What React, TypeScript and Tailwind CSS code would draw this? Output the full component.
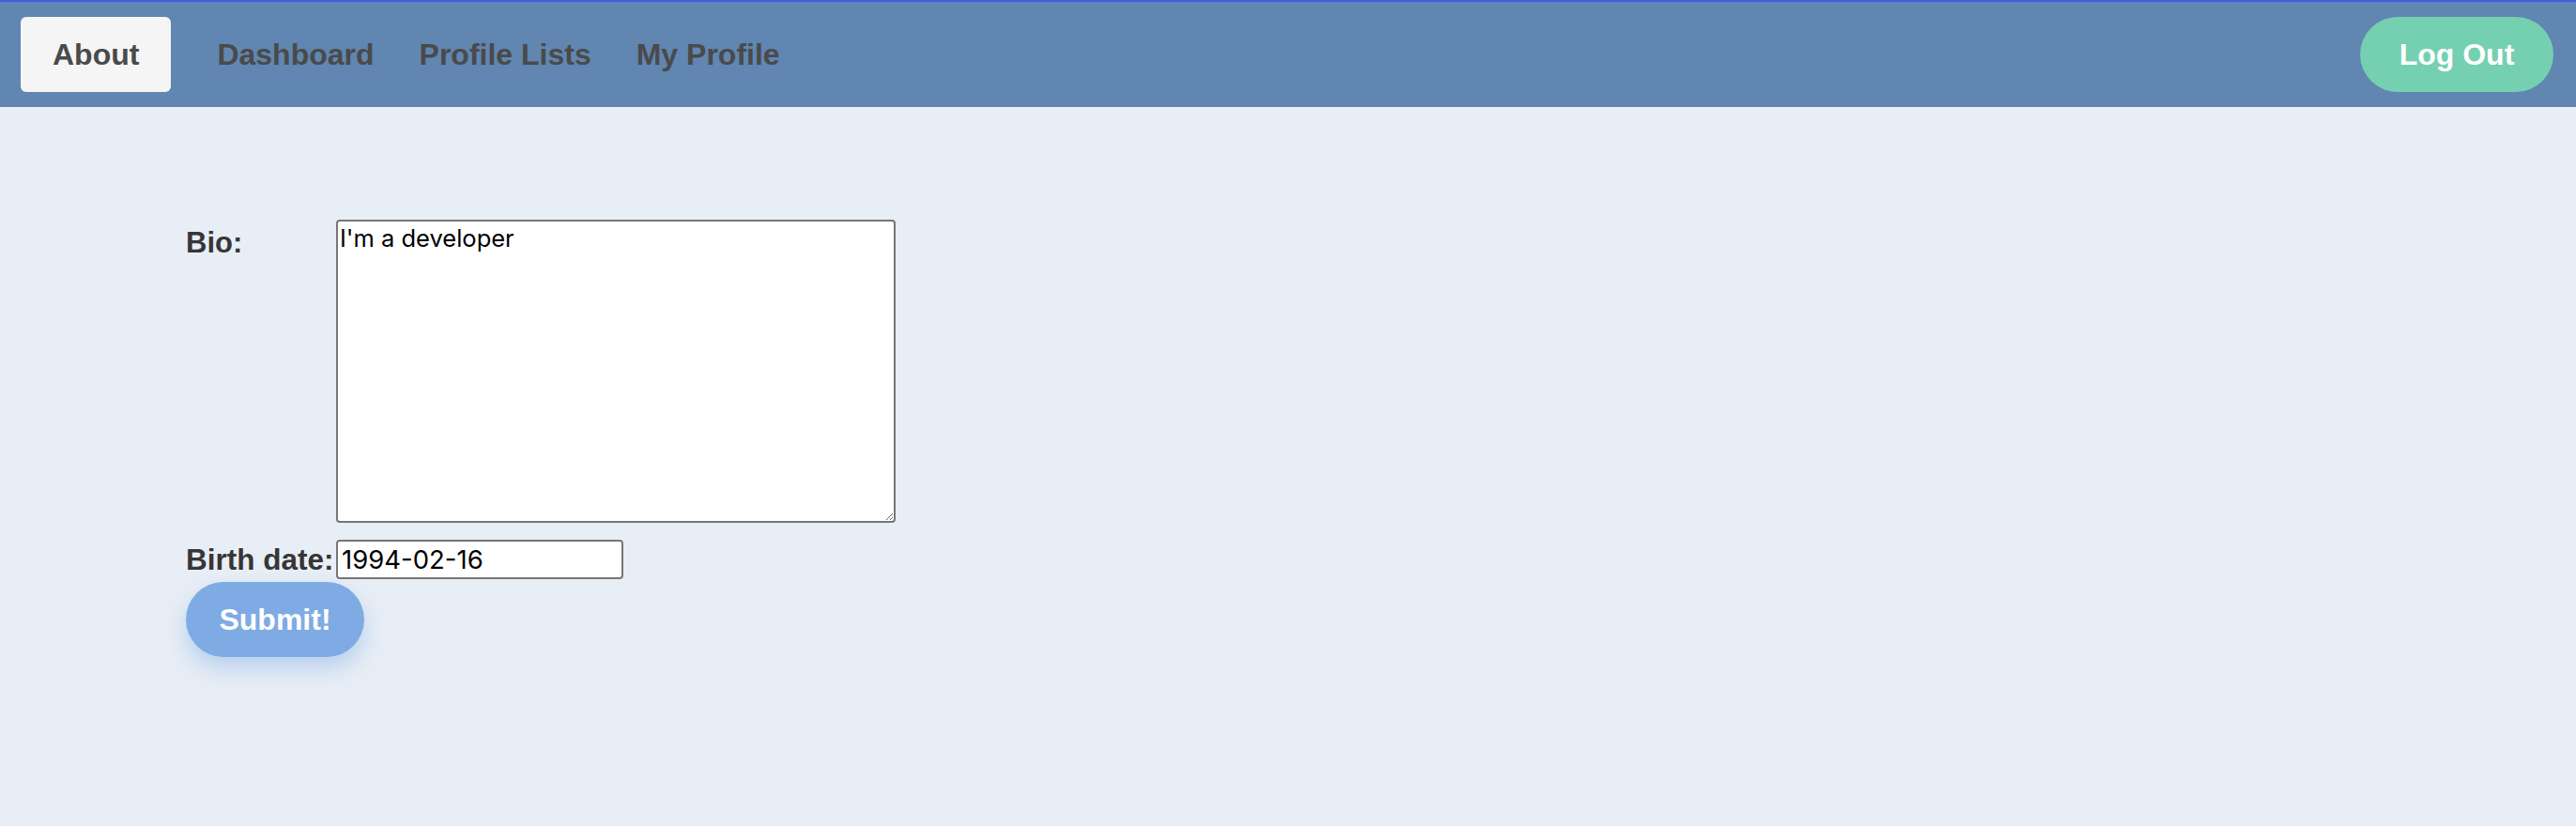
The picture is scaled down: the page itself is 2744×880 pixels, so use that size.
import React from 'react';

const links = ['Dashboard', 'Profile Lists', 'My Profile'];

const App = () => {
  return (
    <div className="min-h-screen bg-[#e8eef6] font-['Liberation_Sans',Arial,sans-serif]">
      <nav className="h-[114px] border-t-2 border-[#3e5fd9] bg-[#6086b1] flex items-center justify-between pl-[22px] pr-[24px]">
        <div className="flex items-center">
          <a className="h-[80px] px-[34px] rounded-[6px] bg-[#f5f5f5] flex items-center text-[32px] font-bold text-[#4a4a4a]">
            About
          </a>
          <div className="ml-[49px] flex items-center gap-[48px]">
            {links.map((l) => (
              <a key={l} className="text-[32px] font-bold text-[#4a4a4a]">
                {l}
              </a>
            ))}
          </div>
        </div>
        <button className="h-[80px] w-[206px] rounded-full bg-[#75d0b1] text-white text-[32px] font-bold">
          Log Out
        </button>
      </nav>

      <form className="pt-[120px] pl-[198px]">
        <div className="grid grid-cols-[160px_auto] justify-start">
          <label className="mt-[7px] text-[31px] leading-[36px] font-bold text-[#363636]">Bio:</label>
          <textarea
            defaultValue="I'm a developer"
            className="block w-[596px] h-[323px] border-2 border-[#767676] rounded-[4px] p-[2px] bg-white text-black text-[25.5px] leading-[1.25] font-['Inter',sans-serif]"
          />
          <label className="mt-[18px] self-center text-[31.5px] leading-[36px] font-bold text-[#363636] whitespace-nowrap">
            Birth date:
          </label>
          <input
            defaultValue="1994-02-16"
            className="mt-[18px] w-[306px] h-[42px] border-2 border-[#767676] rounded-[4px] px-[4px] bg-white text-black text-[27.5px] font-['Inter',sans-serif]"
          />
        </div>
        <button
          type="button"
          className="mt-[3px] h-[80px] w-[190px] rounded-full bg-[#7eabe3] text-white text-[32px] font-bold shadow-[0_12px_24px_rgba(126,171,227,0.45)]"
        >
          Submit!
        </button>
      </form>
    </div>
  );
};

export default App;
